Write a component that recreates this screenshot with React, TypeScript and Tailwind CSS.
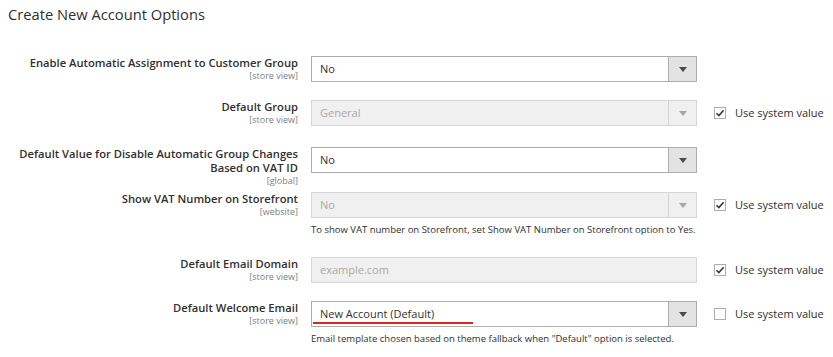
import React from "react";

type RowProps = {
  label: React.ReactNode;
  scope: string;
  children: React.ReactNode;
  system?: boolean | null;
  className?: string;
};

function Arrow({ disabled }: { disabled?: boolean }) {
  return (
    <div
      className={`flex w-[28px] shrink-0 items-center justify-center border-l ${
        disabled ? "border-[#d6d6d6] bg-[#f0f0f0]" : "border-[#adadad] bg-[#e3e3e3]"
      }`}
    >
      <svg width="8" height="5" viewBox="0 0 8 5">
        <path d="M0 0h8L4 5z" fill={disabled ? "#a6a6a6" : "#514943"} />
      </svg>
    </div>
  );
}

function Select({ value, disabled }: { value: string; disabled?: boolean }) {
  return (
    <div
      className={`flex h-[26px] w-[386px] border ${
        disabled ? "border-[#d6d6d6] bg-[#f0f0f0] text-[#a8a8a8]" : "border-[#adadad] bg-white text-[#303030]"
      }`}
    >
      <div className="flex flex-1 items-center pl-[8px] text-[11px]">{value}</div>
      <Arrow disabled={disabled} />
    </div>
  );
}

function Checkbox({ checked }: { checked: boolean }) {
  return (
    <div className="flex items-center gap-[9px]">
      <div className="flex h-[12px] w-[12px] items-center justify-center border border-[#adadad] bg-white">
        {checked && (
          <svg width="10" height="10" viewBox="0 0 10 10">
            <path d="M1.5 5.2l2.4 2.4L8.6 2.3" fill="none" stroke="#41362f" strokeWidth="1.6" />
          </svg>
        )}
      </div>
      <span className="text-[11px] text-[#303030]">Use system value</span>
    </div>
  );
}

function Row({ label, scope, children, system = null, className = "" }: RowProps) {
  return (
    <div className={`flex items-start ${className}`}>
      <div className="w-[298px] shrink-0 text-right">
        <div className="whitespace-nowrap text-[11.2px] font-semibold leading-[14px] text-[#303030]">{label}</div>
        <div className="text-[9px] leading-[11px] text-[#808080]">{scope}</div>
      </div>
      <div className="ml-[13px] w-[386px] shrink-0">{children}</div>
      {system !== null && (
        <div className="ml-[17px] flex h-[26px] items-center">
          <Checkbox checked={system} />
        </div>
      )}
    </div>
  );
}

export default function App() {
  return (
    <div
      className="relative h-[357px] w-[833px] overflow-hidden bg-white"
      style={{ fontFamily: '"Open Sans", "Noto Sans", sans-serif' }}
    >
      <h2 className="pl-[8px] pt-[3px] text-[14.7px] leading-[22px] text-[#303030]">Create New Account Options</h2>

      <div className="mt-[31px] flex flex-col">
        <Row label="Enable Automatic Assignment to Customer Group" scope="[store view]">
          <Select value="No" />
        </Row>

        <Row label="Default Group" scope="[store view]" system className="mt-[18px]">
          <Select value="General" disabled />
        </Row>

        <Row
          label={
            <>
              Default Value for Disable Automatic Group Changes
              <br />
              Based on VAT ID
            </>
          }
          scope="[global]"
          className="mt-[21px]"
        >
          <Select value="No" />
        </Row>

        <Row label="Show VAT Number on Storefront" scope="[website]" system className="mt-[6px]">
          <Select value="No" disabled />
          <p className="mt-[5px] whitespace-nowrap text-[9.5px] leading-[14px] text-[#303030]">
            To show VAT number on Storefront, set Show VAT Number on Storefront option to Yes.
          </p>
        </Row>

        <Row label="Default Email Domain" scope="[store view]" system className="mt-[20px]">
          <div className="flex h-[26px] w-[386px] items-center border border-[#d6d6d6] bg-[#f0f0f0] pl-[8px] text-[11px] text-[#a8a8a8]">
            example.com
          </div>
        </Row>

        <Row label="Default Welcome Email" scope="[store view]" system={false} className="mt-[18px]">
          <div className="relative">
            <Select value="New Account (Default)" />
            <div className="absolute left-[2px] top-[21px] h-[2px] w-[160px] bg-[#e02424]" />
          </div>
          <p className="mt-[5px] whitespace-nowrap text-[9.5px] leading-[14px] text-[#303030]">
            Email template chosen based on theme fallback when "Default" option is selected.
          </p>
        </Row>
      </div>
    </div>
  );
}
